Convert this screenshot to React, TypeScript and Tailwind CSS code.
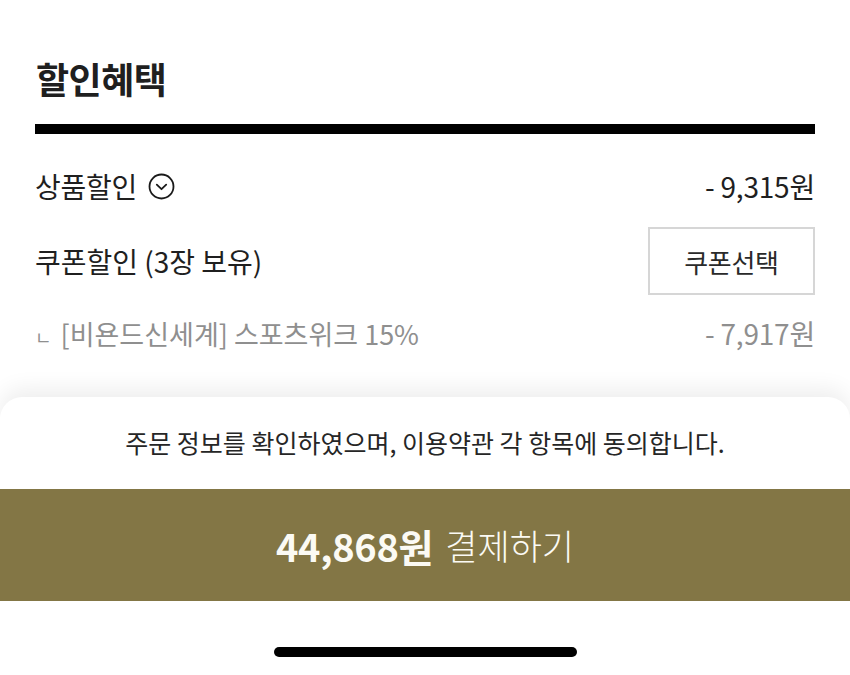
import React from "react";

const KR = { fontFamily: '"Noto Sans CJK KR", "Noto Sans", sans-serif' };

function ChevronCircle() {
  return (
    <svg width="27" height="27" viewBox="0 0 27 27" fill="none" className="shrink-0">
      <circle cx="13.5" cy="13.5" r="12" stroke="#1a1a1a" strokeWidth="1.8" />
      <path d="M8.8 11.6 L13.5 16.2 L18.2 11.6" stroke="#1a1a1a" strokeWidth="1.8" strokeLinecap="round" strokeLinejoin="round" />
    </svg>
  );
}

export default function App() {
  return (
    <div className="relative h-[675px] w-[850px] overflow-hidden bg-white text-[#1f1f1f]" style={KR}>
      <main className="px-[35px] pt-[52px]">
        <h1 className="text-[36px] font-bold leading-[52px] tracking-[-0.5px] pl-[1px]">할인혜택</h1>
        <div className="mt-[20px] h-[10px] bg-black" />

        <div className="mt-[32px] flex h-[40px] items-center justify-between">
          <div className="flex items-center gap-[11px]">
            <span className="text-[28px] leading-none tracking-[-0.3px]">상품할인</span>
            <ChevronCircle />
          </div>
          <span className="text-[28px] leading-none tracking-[-0.2px]">- 9,315원</span>
        </div>

        <div className="mt-[21px] flex h-[68px] items-center justify-between">
          <span className="text-[28px] leading-none tracking-[0px]">쿠폰할인 (3장 보유)</span>
          <button className="flex h-[68px] w-[167px] items-center justify-center border-2 border-[#d6d6d6] bg-white text-[26px] tracking-[-0.3px] text-[#2a2a2a]">
            쿠폰선택
          </button>
        </div>

        <div className="mt-[18px] flex h-[40px] items-center justify-between text-[#8f8f8f]">
          <span className="text-[27px] leading-none tracking-[0px]">
            <span className="mr-[9px] text-[18px]">ㄴ</span>[비욘드신세계] 스포츠위크 15%
          </span>
          <span className="text-[28px] leading-none tracking-[-0.2px]">- 7,917원</span>
        </div>
      </main>

      {/* bottom payment sheet */}
      <div className="absolute inset-x-0 bottom-0 flex h-[278px] flex-col rounded-t-[22px] bg-white shadow-[0_-8px_22px_rgba(0,0,0,0.07)]">
        <div className="flex h-[92px] items-center justify-center">
          <p className="text-[25px] tracking-[0px] text-[#262626]">
            주문 정보를 확인하였으며, 이용약관 각 항목에 동의합니다.
          </p>
        </div>
        <button className="flex h-[112px] w-full items-center justify-center gap-[12px] bg-[#837645] text-[#fbfaf4]">
          <span className="text-[38px] font-bold tracking-[-0.3px]">44,868원</span>
          <span className="text-[35px] font-light tracking-[0px]">결제하기</span>
        </button>
        <div className="flex flex-1 items-start justify-center pt-[46px]">
          <div className="h-[10px] w-[303px] rounded-full bg-black" />
        </div>
      </div>
    </div>
  );
}
